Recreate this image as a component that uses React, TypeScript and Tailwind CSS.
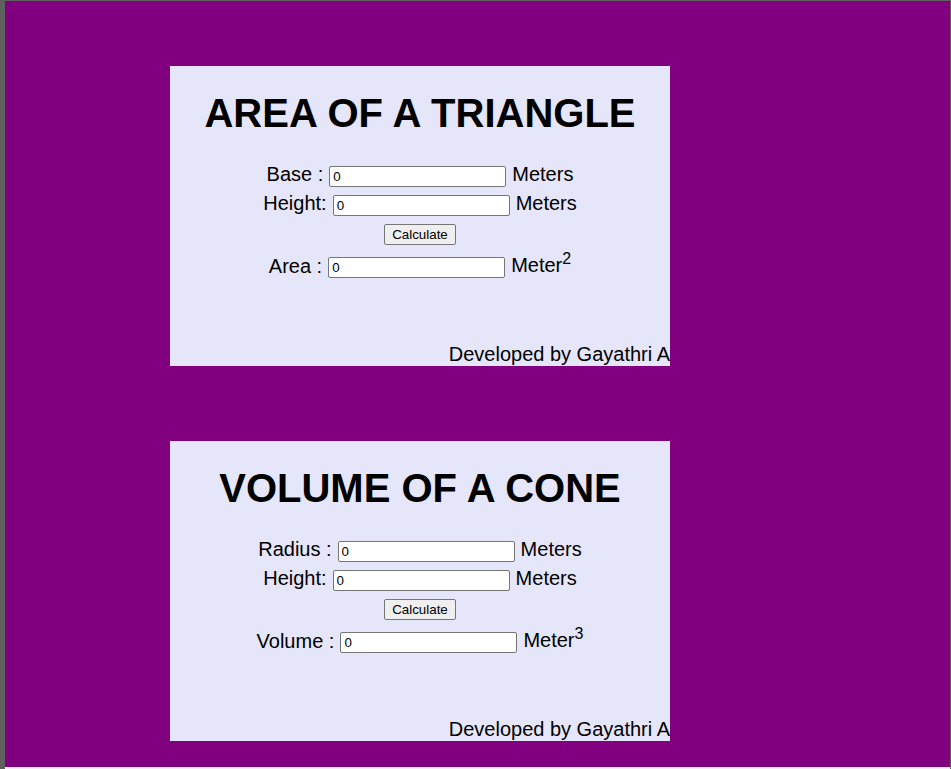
import React from 'react'

type Field = {
  label: string
  unit: string
  sup?: string
}

type CardProps = {
  title: string
  fields: Field[]
  result: Field
}

const Input = () => (
  <input
    type="text"
    defaultValue="0"
    className="w-[177px] h-[21px] px-[3px] border border-[#767676] rounded-[2px] bg-white text-[13.33px] text-black outline-none"
  />
)

const Card = ({ title, fields, result }: CardProps) => {
  return (
    <div className="w-[500px] h-[300px] bg-[#e6e6fa] flex flex-col items-center text-black">
      <h1 className="mt-[24px] text-[40px] font-bold leading-[46px]">{title}</h1>
      <div className="mt-[26px] flex flex-col items-center text-[20px] leading-[23px]">
        {fields.map(f => (
          <div key={f.label} className="h-[29px] flex items-center gap-[6px]">
            <span className="pb-[5px]">{f.label}</span>
            <Input />
            <span className="pb-[5px]">{f.unit}</span>
          </div>
        ))}
        <div className="h-[29px] flex items-center">
          <button className="w-[72px] h-[21px] border border-[#767676] rounded-[2px] bg-[#efefef] text-[13.33px] leading-none">
            Calculate
          </button>
        </div>
        <div className="h-[36px] flex items-center gap-[6px]">
          <span className="pb-[2px]">{result.label}</span>
          <Input />
          <span className="pb-[3px]">
            {result.unit}
            <sup className="text-[16px]">{result.sup}</sup>
          </span>
        </div>
      </div>
      <div className="mt-auto self-stretch text-right text-[20px] leading-[23px]">Developed by Gayathri A</div>
    </div>
  )
}

const App = () => {
  return (
    <div className="min-h-screen bg-[#5f5f5f] pl-[5px] pt-px pr-px font-['Liberation_Sans',Arial,sans-serif]">
      <div className="h-[766px] bg-[#800080] pl-[165px] pt-[65px]">
        <Card
          title="AREA OF A TRIANGLE"
          fields={[
            { label: 'Base :', unit: 'Meters' },
            { label: 'Height:', unit: 'Meters' },
          ]}
          result={{ label: 'Area :', unit: 'Meter', sup: '2' }}
        />
        <div className="mt-[75px]">
          <Card
            title="VOLUME OF A CONE"
            fields={[
              { label: 'Radius :', unit: 'Meters' },
              { label: 'Height:', unit: 'Meters' },
            ]}
            result={{ label: 'Volume :', unit: 'Meter', sup: '3' }}
          />
        </div>
      </div>
      <div className="h-[2px] bg-[#f0f0f0]" />
    </div>
  )
}

export default App
